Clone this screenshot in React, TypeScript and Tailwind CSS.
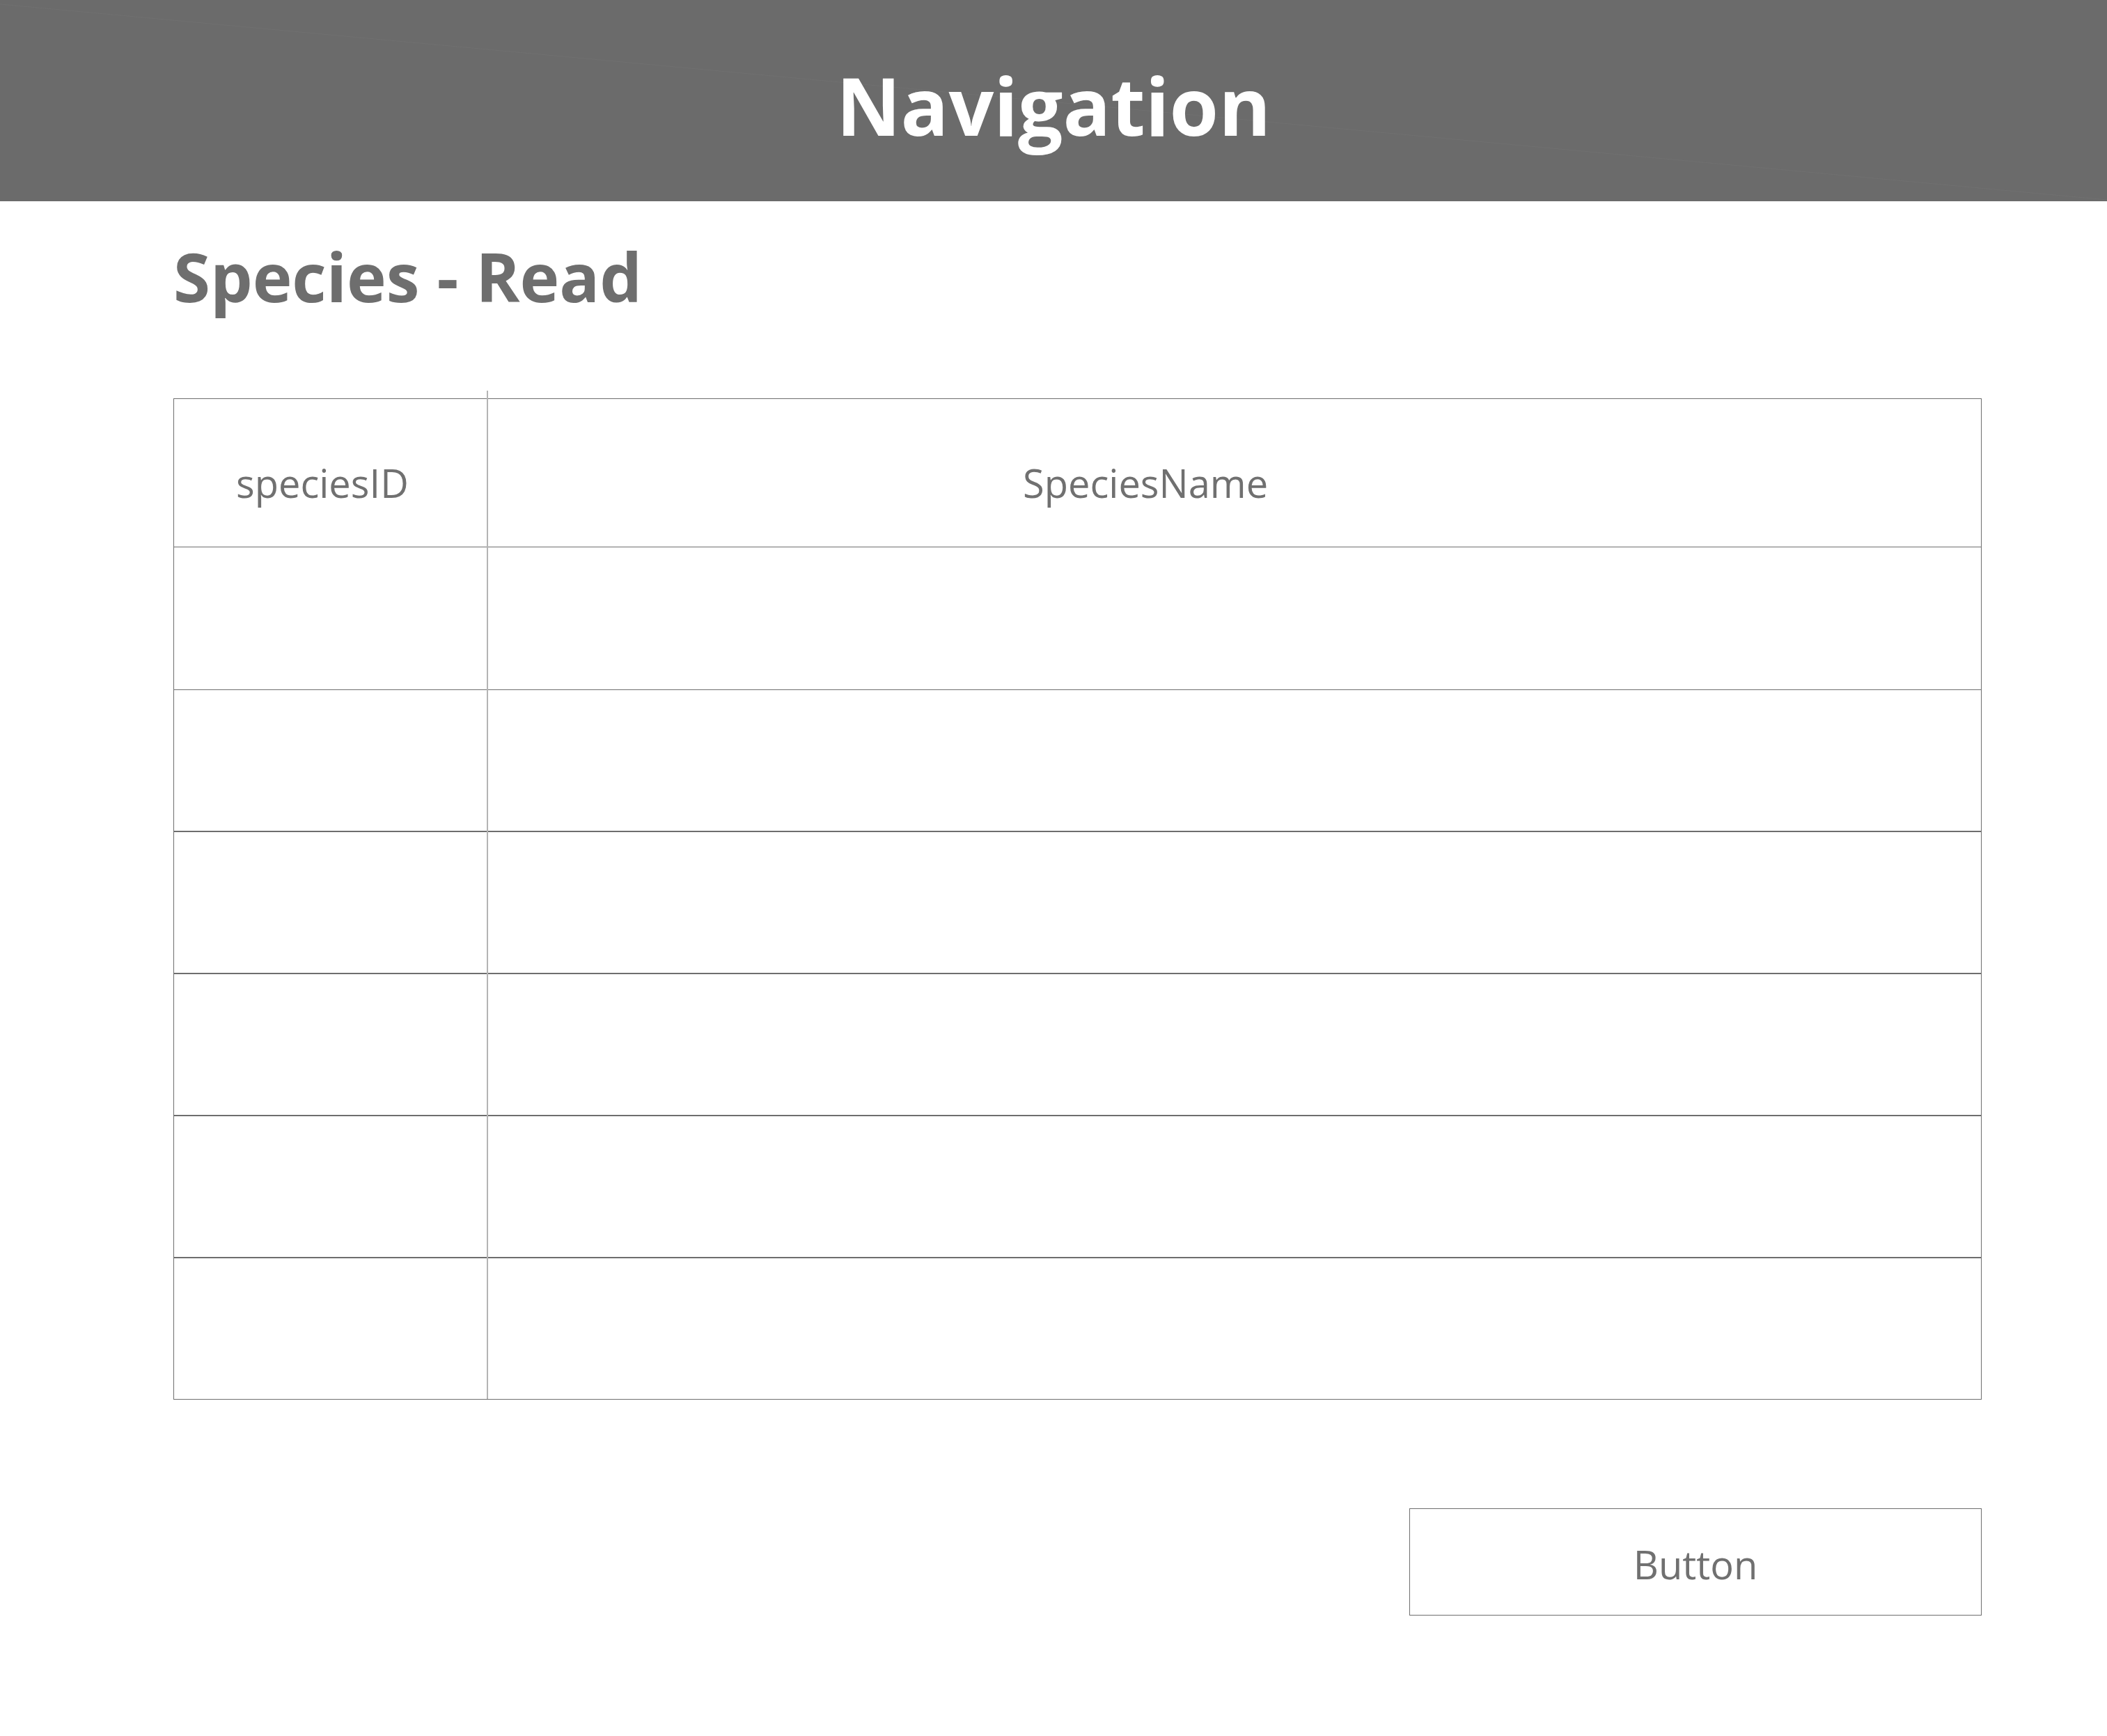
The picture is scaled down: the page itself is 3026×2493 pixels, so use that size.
const rows = [
  { h: 'h-[205px]', line: 'border-b' },
  { h: 'h-[204px]', line: 'border-b-2' },
  { h: 'h-[204px]', line: 'border-b-2' },
  { h: 'h-[204px]', line: 'border-b-2' },
  { h: 'h-[204px]', line: 'border-b-2' },
  { h: 'h-[202px]', line: '' },
];

const App = () => {
  return (
    <div className="min-h-screen bg-white font-['Open_Sans',sans-serif] text-[#707070]">
      <header className="relative h-[289px] bg-[#6b6b6b] flex items-center justify-center pt-[12px]">
        {/* faint placeholder diagonal from the wireframe */}
        <svg className="absolute inset-0 w-full h-full" preserveAspectRatio="none" viewBox="0 0 3026 289">
          <line x1="0" y1="6" x2="3026" y2="287" stroke="#707070" strokeWidth="1" />
        </svg>
        <h1 className="relative text-[114px] leading-none font-bold text-white">Navigation</h1>
      </header>

      <main className="ml-[249px] w-[2597px]">
        <h2 className="mt-[60px] text-[96px] leading-none font-bold text-[#6e6e6e]">Species - Read</h2>

        <div className="relative mt-[127px] border border-[#6e6e6e]">
          <div className="absolute left-[449px] top-[-12px] bottom-0 w-[2px] bg-[#b4b4b4] z-10" />

          <div className="h-[213px] border-b border-[#6e6e6e] flex text-[56px] leading-none">
            <div className="w-[451px] pl-[89px] pt-[92px]">speciesID</div>
            <div className="flex-1 pl-[768px] pt-[92px]">SpeciesName</div>
          </div>

          {rows.map((r, i) => (
            <div key={i} className={`${r.h} ${r.line} border-[#6e6e6e] flex`}>
              <div className="w-[451px]" />
              <div className="flex-1" />
            </div>
          ))}
        </div>

        <div className="flex justify-end mt-[156px]">
          <button className="w-[822px] h-[154px] border border-[#6e6e6e] bg-white text-[56px] leading-none text-[#707070] pt-[6px]">
            Button
          </button>
        </div>
      </main>
    </div>
  );
};

export default App;
